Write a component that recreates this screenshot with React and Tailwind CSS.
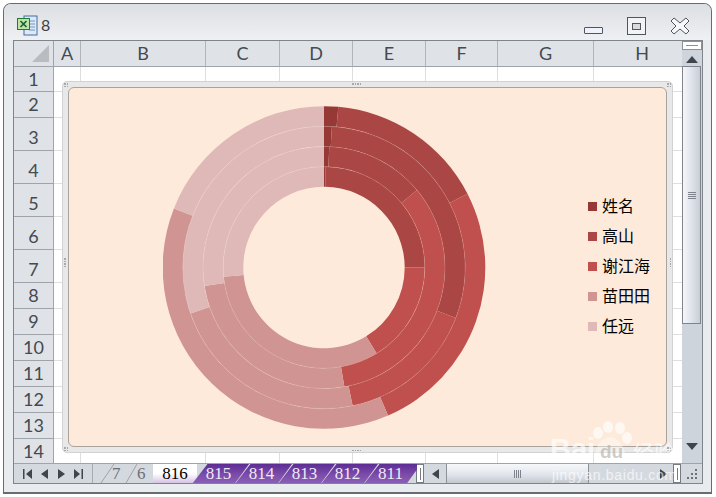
import React from 'react';

const colWidths = [
  ['A', 'w-[27px]'],
  ['B', 'w-[125px]'],
  ['C', 'w-[74px]'],
  ['D', 'w-[73px]'],
  ['E', 'w-[73px]'],
  ['F', 'w-[72px]'],
  ['G', 'w-[96px]'],
  ['H', 'w-[97px]'],
];
// tall rows keep their number low in the cell, like Excel does
const rowStyles = [
  'h-[25px]',
  'h-[26px]',
  'h-[33px] pt-[6px]',
  'h-[33px] pt-[6px]',
  'h-[33px] pt-[6px]',
  'h-[33px] pt-[6px]',
  'h-[33px] pt-[6px]',
  'h-[26px]',
  'h-[26px]',
  'h-[26px]',
  'h-[26px]',
  'h-[26px]',
  'h-[26px]',
  'h-[26px]',
];
const rowHeights = ['h-[25px]', 'h-[26px]', 'h-[33px]', 'h-[33px]', 'h-[33px]', 'h-[33px]', 'h-[33px]', 'h-[26px]', 'h-[26px]', 'h-[26px]', 'h-[26px]', 'h-[26px]', 'h-[26px]', 'h-[26px]'];

const colors = ['#953836', '#aa4644', '#c0504d', '#d09492', '#dfb9b8'];
const names = ['姓名', '高山', '谢江海', '苗田田', '任远'];
const radii = [80.7, 100.8, 121, 141.2, 161.3];
// slice end angles per ring, inner to outer, clockwise from 12 o'clock
const rings = [
  [0.9, 90, 148.5, 264.7, 360],
  [2.5, 50.2, 170.3, 261.2, 360],
  [3.2, 111, 168.3, 251, 360],
  [5.1, 62.8, 156.6, 291.5, 360],
];

function point(r, deg) {
  const a = (deg * Math.PI) / 180;
  return `${(161 + r * Math.sin(a)).toFixed(2)} ${(161.5 - r * Math.cos(a)).toFixed(2)}`;
}

function wedge(r0, r1, a0, a1) {
  const end = a1 === 360 ? 359.99 : a1;
  const large = end - a0 > 180 ? 1 : 0;
  return `M${point(r1, a0)} A${r1} ${r1} 0 ${large} 1 ${point(r1, end)} L${point(r0, end)} A${r0} ${r0} 0 ${large} 0 ${point(r0, a0)} Z`;
}

function Donut() {
  return (
    <svg width="323" height="323" viewBox="0 0 323 323" className="shrink-0">
      {rings.map((ends, i) =>
        ends.map((end, j) => (
          <path key={`${i}-${j}`} d={wedge(radii[i], radii[i + 1], j === 0 ? 0 : ends[j - 1], end)} fill={colors[j]} />
        ))
      )}
      {[100.8, 121, 141.2].map((r) => (
        <circle key={r} cx="161" cy="161.5" r={r} fill="none" stroke="#ffffff" strokeOpacity="0.22" strokeWidth="0.6" />
      ))}
    </svg>
  );
}

function Dots({ className }) {
  return (
    <div className={`absolute grid grid-cols-2 gap-[1px] ${className}`}>
      <span className="w-[1.5px] h-[1.5px] bg-[#a8a8a8]" />
      <span className="w-[1.5px] h-[1.5px] bg-[#a8a8a8]" />
      <span className="w-[1.5px] h-[1.5px] bg-[#a8a8a8]" />
      <span className="w-[1.5px] h-[1.5px] bg-[#a8a8a8]" />
    </div>
  );
}

function Chart() {
  return (
    <div className="absolute left-[48px] top-[40px] w-[611px] h-[372px] p-[5px] bg-[#e8e8e8] border border-[#d2d2d2] rounded-[5px]">
      <Dots className="left-[1px] top-[1px]" />
      <Dots className="right-[1px] top-[1px]" />
      <Dots className="left-[1px] bottom-[1px]" />
      <Dots className="right-[1px] bottom-[1px]" />
      <Dots className="left-[289px] top-[1px] !grid-cols-4" />
      <Dots className="left-[289px] bottom-[1px] !grid-cols-4" />
      <Dots className="left-[1px] top-[176px] !grid-cols-1" />
      <Dots className="right-[1px] top-[176px] !grid-cols-1" />
      <div className="flex items-center w-full h-full bg-[#fdeada] border border-[#aaa39c] rounded-[6px] pl-[94px]">
        <Donut />
        <div className="flex flex-col ml-[102px] mt-[-2px] font-['Noto_Sans_CJK_SC',sans-serif] text-[16px] text-black">
          {names.map((name, i) => (
            <div key={name} className="flex items-center h-[30px] gap-[5px]">
              <span className="w-[9px] h-[9px]" style={{ backgroundColor: colors[i] }} />
              <span className="mb-[3px]">{name}</span>
            </div>
          ))}
        </div>
      </div>
    </div>
  );
}

function Grid() {
  return (
    <div className="relative w-[668px] overflow-hidden font-['Lato',sans-serif] text-[18px] text-[#454a50]">
      <div className="flex h-[26px] bg-[#dfe3e8] border-b border-[#9fa4aa]">
        <div className="w-[40px] shrink-0 border-r border-[#9fa4aa] flex items-end justify-end p-[4px]">
          <svg width="17" height="17" viewBox="0 0 17 17">
            <polygon points="17,0 17,17 0,17" fill="#b9bdc2" />
          </svg>
        </div>
        {colWidths.map(([label, w]) => (
          <div key={label} className={`${w} shrink-0 border-r border-[#b1b5ba] flex items-center justify-center`}>
            {label}
          </div>
        ))}
      </div>
      {rowHeights.map((h, i) => (
        <div key={i} className={`flex ${h} bg-white`}>
          <div className={`${rowStyles[i]} w-[40px] shrink-0 bg-[#dfe3e8] border-r border-b border-[#9fa4aa] flex items-center justify-center`}>
            {i + 1}
          </div>
          {colWidths.map(([label, w]) => (
            <div key={label} className={`${w} shrink-0 border-r border-b border-[#dedede]`} />
          ))}
        </div>
      ))}
      <Chart />
    </div>
  );
}

function Triangle({ dir, className = '' }) {
  const points = {
    up: '0,7 6,0 12,7',
    down: '0,0 12,0 6,7',
  };
  return (
    <svg width="12" height="7" viewBox="0 0 12 7" className={className}>
      <polygon points={points[dir]} fill="#3f454c" />
    </svg>
  );
}

function VScroll() {
  return (
    <div className="w-[20px] h-[422px] overflow-hidden flex flex-col items-center bg-[#ced4dc]">
      <div className="w-[20px] h-[9px] bg-white border border-[#8d9298] flex items-center justify-center shrink-0">
        <span className="w-[12px] h-[1px] bg-[#8d9298]" />
      </div>
      <Triangle dir="up" className="mt-[6px] shrink-0" />
      <div className="mt-[3px] ml-[-1px] w-[19px] h-[258px] shrink-0 border border-[#7e848b] bg-gradient-to-r from-[#f4f6f9] via-[#dfe4ec] to-[#c9ced6] flex flex-col items-center justify-center gap-[1px]">
        {[0, 1, 2, 3].map((n) => (
          <span key={n} className="w-[8px] h-[1px] bg-[#7d838a]" />
        ))}
      </div>
      <Triangle dir="down" className="mt-[119px] shrink-0" />
    </div>
  );
}

function NavIcon({ points, bar }) {
  return (
    <svg width="9" height="10" viewBox="0 0 9 10">
      <polygon points={points} fill="#3f454c" />
      {bar !== undefined && <rect x={bar} y="0" width="1.5" height="10" fill="#3f454c" />}
    </svg>
  );
}

function Tab({ label }) {
  return (
    <div className="w-[58px] h-[20px] ml-[-15px] shrink-0 flex items-center justify-center pr-[5px] text-[#f1e9f7] bg-gradient-to-b from-[#5d2c94] via-[#7a4aa8] to-[#8a62b5] [clip-path:polygon(15.5px_0,57px_0,42.5px_100%,0_100%)]">
      {label}
    </div>
  );
}

function TabBar() {
  return (
    <div className="flex h-[20px] border-t border-[#9fa4aa] bg-[#d4d9e0] font-['Liberation_Serif',serif] text-[17px]">
      <div className="w-[79px] h-full shrink-0 flex items-center justify-around px-[5px] border-r border-[#a6abb1]">
        <NavIcon points="9,0 9,10 3,5" bar={0} />
        <NavIcon points="8,0 8,10 1,5" />
        <NavIcon points="1,0 1,10 8,5" />
        <NavIcon points="0,0 0,10 6,5" bar={7.5} />
      </div>
      <div className="relative w-[60px] h-full shrink-0 text-[#6c7076]">
        <svg width="60" height="19" viewBox="0 0 60 19" className="absolute left-0 top-0">
          <path d="M21 0 L8 19 M44 0 L33 19" stroke="#9ea3a9" fill="none" />
        </svg>
        <span className="absolute left-[19px] top-[-3px]">7</span>
        <span className="absolute left-[44px] top-[-3px]">6</span>
      </div>
      <div className="w-[44px] h-full shrink-0 bg-gradient-to-b from-white via-white to-[#d5c3e4] text-black flex items-center justify-center">
        816
      </div>
      <div className="flex h-full w-[225px] ml-[-5px] pl-[15px] shrink-0 overflow-hidden">
        {['815', '814', '813', '812', '811'].map((t) => (
          <Tab key={t} label={t} />
        ))}
      </div>
      <div className="w-[8px] ml-[-1px] h-full shrink-0 bg-white border border-[#777c82] flex items-center justify-center">
        <span className="w-[1px] h-[12px] bg-[#777c82]" />
      </div>
      <div className="w-[22px] h-full shrink-0 flex items-center pl-[8px]">
        <svg width="7" height="10" viewBox="0 0 7 10">
          <polygon points="7,0 7,10 0,5" fill="#3f454c" />
        </svg>
      </div>
      <div className="w-[143px] h-full shrink-0 border-x border-[#8d9298] bg-gradient-to-b from-[#f6f8fa] via-[#e4e8ee] to-[#c3c8d0] flex items-center justify-center gap-[1px]">
        {[0, 1, 2, 3].map((n) => (
          <span key={n} className="w-[1px] h-[8px] bg-[#7d838a]" />
        ))}
      </div>
      <div className="flex-1 flex items-center justify-end pr-[1px]">
        <svg width="7" height="10" viewBox="0 0 7 10" className="mr-[6px]">
          <polygon points="0,0 0,10 7,5" fill="#3f454c" />
        </svg>
        <div className="w-[8px] h-[19px] bg-white border border-[#777c82] flex items-center justify-center">
          <span className="w-[1px] h-[12px] bg-[#777c82]" />
        </div>
      </div>
      <div className="w-[20px] h-full shrink-0 flex items-end justify-end pb-[4px] pr-[4px]">
        <svg width="11" height="10" viewBox="0 0 11 10" fill="#6d7279">
          <rect x="8" y="0" width="2" height="2" />
          <rect x="8" y="4" width="2" height="2" />
          <rect x="4" y="4" width="2" height="2" />
          <rect x="8" y="8" width="2" height="2" />
          <rect x="4" y="8" width="2" height="2" />
          <rect x="0" y="8" width="2" height="2" />
        </svg>
      </div>
    </div>
  );
}

function TitleBar() {
  return (
    <div className="flex items-center h-[36px] pl-[13px] bg-gradient-to-b from-[#dcdfe3] to-[#eef0f3] rounded-t-[7px]">
      <svg width="21" height="21" viewBox="0 0 21 21" className="mt-[6px] shrink-0">
        <rect x="7" y="1" width="13" height="19" fill="#dfe9f5" stroke="#3f6fa8" />
        <path d="M12 6h6M12 9h6M12 12h6M12 15h6" stroke="#6f96c4" />
        <rect x="0.5" y="3.5" width="12" height="11" fill="#bfe3a6" stroke="#1f7a3a" />
        <path d="M3.5 6 L9.5 12 M9.5 6 L3.5 12" stroke="#15602c" strokeWidth="1.6" />
      </svg>
      <span className="ml-[3px] mt-[6px] font-['Lato',sans-serif] text-[16px] text-[#3d4247]">8</span>
      <div className="ml-auto flex items-center pr-[21px]">
        <div className="w-[19px] h-[7px] mt-[17px] rounded-[1px] bg-[#eef2fb] border border-[#50565c]" />
        <div className="ml-[24px] w-[19px] h-[18px] mt-[8px] border border-[#50565c] bg-[#f1f3f5] flex items-center justify-center">
          <span className="w-[9px] h-[7px] bg-[#d7dbe0] border border-[#50565c]" />
        </div>
        <svg width="20" height="18" viewBox="0 0 20 18" className="ml-[24px] mt-[8px]">
          <path
            d="M1 4 L4 1 L10 6 L16 1 L19 4 L14 9 L19 14 L16 17 L10 12 L4 17 L1 14 L6 9 Z"
            fill="#f7f8fa"
            stroke="#50565c"
            strokeLinejoin="round"
          />
        </svg>
      </div>
    </div>
  );
}

function Watermark() {
  return (
    <div className="absolute left-[548px] top-[418px] w-[136px] h-[72px] text-white/65 pointer-events-none">
      <svg width="44" height="50" viewBox="0 0 44 50" className="absolute left-[42px] top-0" fill="#ffffff" fillOpacity="0.65">
        <ellipse cx="8" cy="15" rx="5" ry="6" />
        <ellipse cx="18" cy="9" rx="5" ry="6" />
        <ellipse cx="30" cy="10" rx="5" ry="6" />
        <ellipse cx="37" cy="20" rx="5" ry="6" />
        <path d="M20 19 C12 19 3 32 5 39 C7 47 33 47 35 39 C37 32 28 19 20 19 Z" fillOpacity="0.4" />
      </svg>
      <span className="absolute left-[2px] top-[17px] font-['Liberation_Sans',sans-serif] font-bold text-[29px] leading-none">Bai</span>
      <span className="absolute left-[52px] top-[24px] font-['Liberation_Sans',sans-serif] font-bold text-[19px] leading-none text-[#b5aaa1]/60">du</span>
      <span className="absolute left-[85px] top-[23px] font-['Noto_Sans_CJK_SC',sans-serif] text-[21px] leading-none">经验</span>
      <span className="absolute left-[4px] top-[50px] font-['Liberation_Sans',sans-serif] text-[14px] leading-none tracking-[0.7px] whitespace-nowrap">jingyan.baidu.com</span>
    </div>
  );
}

export default function App() {
  return (
    <div className="relative w-[716px] h-[497px] overflow-hidden bg-white pl-[3px] pt-[3px]">
      <div className="w-[709px] h-[491px] border border-[#666c72] border-b-2 rounded-t-[8px] bg-[#e9ecef]">
        <TitleBar />
        <div className="ml-[9px] w-[690px] border border-[#7f858b]">
          <div className="flex h-[422px]">
            <Grid />
            <VScroll />
          </div>
          <TabBar />
        </div>
      </div>
      <Watermark />
    </div>
  );
}
